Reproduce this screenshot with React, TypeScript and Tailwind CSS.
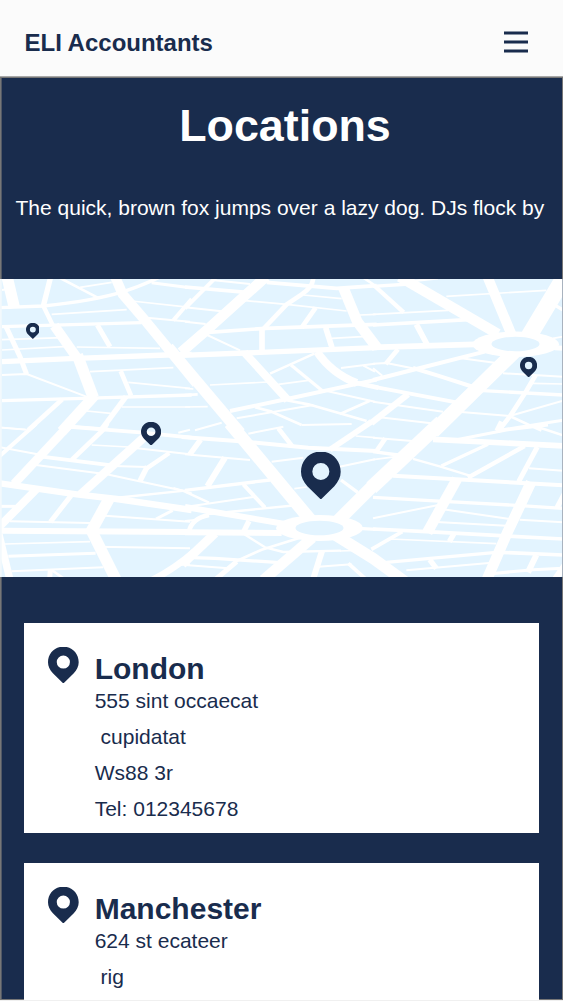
type Road = [width: number, d: string];

interface Tile {
  x: number;
  y: number;
  roads: Road[];
}

// Road strokes, one group per map tile, drawn at three units to the pixel.
const tiles: Tile[] = [
  {
    x: 0,
    y: -4,
    roads: [
      [34, 'M20 0L43 98'],
      [10, 'M0 98L130 93Q280 78 370 50Q430 30 475 8'],
      [16, 'M152 6L130 93'],
      [13, 'M130 93L158 150'],
      [30, 'M163 152L232 250'],
      [34, 'M232 240L280 368'],
      [32, 'M285 360L185 470'],
      [8, 'M178 8L293 68'],
      [5, 'M240 37L335 22'],
      [30, 'M343 0L368 58L440 142L508 225L590 326'],
      [5, 'M395 78L570 97'],
      [9, 'M455 23L570 38'],
      [5, 'M155 118L380 104'],
      [12, 'M575 72L520 136'],
      [6, 'M440 128L570 140'],
      [10, 'M6 155L425 143'],
      [15, 'M18 155L60 245L80 298'],
      [5, 'M6 194L190 188'],
      [5, 'M6 225L205 214'],
      [5, 'M230 216L480 220'],
      [15, 'M292 150L330 215'],
      [16, 'M6 260L230 250L500 240L575 238'],
      [6, 'M6 300L80 297L265 367'],
      [5, 'M270 290L520 278'],
      [14, 'M362 288L393 362'],
      [5, 'M385 322L570 340'],
      [10, 'M6 377L250 370L575 360'],
      [14, 'M187 373L85 465'],
      [16, 'M378 365L300 470'],
      [5, 'M365 396L570 396'],
      [5, 'M260 408L332 415'],
      [8, 'M220 454L325 462'],
      [5, 'M0 457L80 464'],
      [6, 'M6 45L22 42'],
    ],
  },
  {
    x: 185,
    y: -4,
    roads: [
      [31, 'M243 5L62 168L-12 232'],
      [11, 'M0 36L185 52'],
      [12, 'M92 8L0 100'],
      [6, 'M80 15L195 27'],
      [6, 'M0 97L110 109'],
      [6, 'M0 140L62 147'],
      [11, 'M245 22L455 40L575 32'],
      [8, 'M535 8L572 33'],
      [14, 'M385 6Q385 35 350 58L305 88L235 162'],
      [5, 'M180 77L305 88L485 108'],
      [5, 'M355 60L470 71'],
      [14, 'M392 98L350 158'],
      [32, 'M475 38L517 140L576 218'],
      [11, 'M60 173L240 160L575 148'],
      [5, 'M525 120L572 118'],
      [5, 'M440 190L545 184'],
      [17, 'M422 158L441 218'],
      [17, 'M231 162L231 228'],
      [6, 'M60 177L165 226'],
      [16, 'M-10 241L180 234L575 218'],
      [24, 'M178 232L308 375'],
      [34, 'M-50 217L26 308L166 474'],
      [7, 'M388 236L255 296'],
      [24, 'M396 230Q440 295 515 324'],
      [14, 'M505 322L580 338'],
      [10, 'M318 270L412 347'],
      [6, 'M468 279L570 266'],
      [6, 'M535 272L570 290'],
      [5, 'M280 328L370 316'],
      [5, 'M75 330L248 321'],
      [12, 'M135 408L320 369L575 314'],
      [8, 'M300 375L370 388L545 438'],
      [6, 'M415 346L570 380'],
      [8, 'M555 377L465 417'],
      [6, 'M155 430L385 390'],
      [8, 'M210 397L260 410L350 450'],
      [6, 'M350 450L500 447'],
      [6, 'M30 466L110 443'],
      [8, 'M0 360L38 358'],
      [5, 'M0 340L25 342'],
      [5, 'M0 396L68 395'],
    ],
  },
  {
    x: 373,
    y: -4,
    roads: [
      [31, 'M80 5L375 177'],
      [10, 'M0 34L110 27'],
      [7, 'M105 20L195 10'],
      [13, 'M5 33L92 112'],
      [5, 'M0 118L225 106'],
      [30, 'M343 4L416 180'],
      [50, 'M575 5L468 183'],
      [10, 'M548 92L575 108'],
      [5, 'M220 64L520 46'],
      [11, 'M0 150L285 134'],
      [17, 'M130 148L163 210'],
      [17, 'M0 217L305 208'],
      [5, 'M540 190L570 185'],
      [15, 'M545 218L575 220'],
      [14, 'M75 223L38 267'],
      [6, 'M0 266L40 264L130 282'],
      [12, 'M120 279L195 302L320 342'],
      [12, 'M335 230L130 282L0 315'],
      [6, 'M265 250L370 264'],
      [42, 'M425 230L180 470'],
      [11, 'M0 335L250 382'],
      [10, 'M330 347L570 360'],
      [6, 'M390 295L570 305'],
      [5, 'M478 325L570 327'],
      [14, 'M488 300L460 348L410 425L375 470'],
      [6, 'M0 280L28 302'],
      [19, 'M105 358L-5 444'],
      [6, 'M0 380L210 410'],
      [6, 'M265 411L410 423L570 377'],
      [6, 'M20 427L175 445'],
      [8, 'M410 423L505 467'],
      [9, 'M385 465L570 436'],
    ],
  },
  {
    x: 0,
    y: 146,
    roads: [
      [26, 'M215 -8L42 177'],
      [12, 'M108 -4L0 92'],
      [5, 'M0 8L75 14'],
      [6, 'M0 67L125 90'],
      [11, 'M200 5L420 22L575 38'],
      [14, 'M322 -5L312 12L215 105'],
      [26, 'M440 30L240 210'],
      [6, 'M535 23L570 14'],
      [5, 'M275 60L385 66'],
      [6, 'M405 69L570 88'],
      [11, 'M125 95L335 121'],
      [6, 'M340 123L440 126'],
      [13, 'M508 84L440 130'],
      [16, 'M442 124L420 168'],
      [6, 'M108 120L320 148L550 197'],
      [19, 'M0 175L230 208L350 222L575 255'],
      [7, 'M345 219L555 197'],
      [7, 'M520 189L575 206'],
      [24, 'M110 192L-5 308'],
      [9, 'M0 244L45 244'],
      [15, 'M213 212L151 291'],
      [6, 'M30 289L270 294'],
      [34, 'M328 220L272 322'],
      [34, 'M272 312L348 464'],
      [18, 'M0 317L575 321'],
      [6, 'M315 272L570 290'],
      [9, 'M518 256L468 282'],
      [5, 'M15 357L270 350'],
      [6, 'M290 365L570 370'],
      [9, 'M25 394L287 385'],
      [6, 'M35 439L310 427'],
      [15, 'M151 433L149 462'],
      [8, 'M155 435L192 461'],
      [20, 'M582 380Q525 430 455 466'],
      [6, 'M540 420L570 418'],
      [22, 'M-3 328L30 465'],
    ],
  },
  {
    x: 185,
    y: 146,
    roads: [
      [38, 'M134 -6L378 287'],
      [12, 'M-10 36L155 48L370 68L575 78'],
      [6, 'M190 26L295 5'],
      [16, 'M47 44L14 89'],
      [14, 'M280 10L322 64'],
      [6, 'M0 88L195 105'],
      [6, 'M260 110L355 98'],
      [18, 'M120 98L67 184'],
      [10, 'M0 196L255 165'],
      [7, 'M0 200L72 233'],
      [12, 'M175 178L240 248'],
      [6, 'M0 246L205 216'],
      [7, 'M70 267L340 240'],
      [18, 'M0 246L300 297'],
      [18, 'M0 322L290 324'],
      [14, 'M72 270Q20 280 12 320'],
      [6, 'M0 288L30 285'],
      [16, 'M192 288L175 322'],
      [38, 'M458 288L570 176'],
      [5, 'M328 191L365 186'],
      [10, 'M468 165L518 202'],
      [6, 'M460 126L570 103'],
      [17, 'M560 -10L435 74'],
      [5, 'M512 33L570 38'],
      [10, 'M520 310L572 313'],
      [27, 'M90 325L-8 418'],
      [7, 'M178 328L240 367L295 381L468 377'],
      [8, 'M345 338L230 374L155 408L120 440'],
      [15, 'M155 410L92 463'],
      [10, 'M0 397L90 400L285 413'],
      [32, 'M382 338L235 465'],
      [34, 'M448 328L564 400L660 470'],
      [18, 'M411 378L384 464'],
      [6, 'M0 420L130 430'],
      [6, 'M400 425L500 418'],
      [11, 'M490 415L542 462'],
      [5, 'M465 378L515 376'],
    ],
  },
  {
    x: 373,
    y: 146,
    roads: [
      [43, 'M205 -9L-5 188'],
      [16, 'M386 -10L372 18'],
      [9, 'M235 47L400 15L525 0'],
      [8, 'M485 3L570 31'],
      [17, 'M180 43L575 63'],
      [6, 'M0 38L118 48'],
      [14, 'M37 40L8 82'],
      [10, 'M0 80L75 90'],
      [5, 'M0 104L75 94'],
      [10, 'M345 58L205 123'],
      [7, 'M120 102L200 124L290 152'],
      [13, 'M455 63L285 158'],
      [15, 'M493 66L437 170'],
      [6, 'M468 130L570 137'],
      [12, 'M60 152L570 181'],
      [32, 'M252 162L163 322'],
      [32, 'M474 172L402 325L342 463'],
      [10, 'M0 217L225 230L430 241L570 250'],
      [16, 'M575 205L552 248'],
      [6, 'M0 280L200 239'],
      [6, 'M210 253L410 282'],
      [6, 'M440 284L570 292'],
      [6, 'M190 291L400 302'],
      [11, 'M0 312L160 320L570 342'],
      [11, 'M88 320L-5 373'],
      [5, 'M50 342L370 356'],
      [16, 'M243 326L229 350'],
      [10, 'M40 412L370 382'],
      [11, 'M380 382L570 390'],
      [16, 'M170 404L190 430'],
      [6, 'M100 436L348 414'],
      [18, 'M490 390L465 442'],
      [9, 'M355 446L480 434L570 430'],
      [20, 'M580 415L545 465'],
    ],
  },
];

function Pin({ className }: { className: string }) {
  return (
    <svg viewBox="0 0 40 48" preserveAspectRatio="none" className={className} fill="#192c4d" aria-hidden="true">
      <path
        fillRule="evenodd"
        d="M15.5 0H24.5C33.5 2 40 10 40 20C40 25.4 37.6 30.2 33.6 34.6L20 48L6.4 34.6C2.4 30.2 0 25.4 0 20C0 10 6.5 2 15.5 0ZM20 11.2A8.6 8.6 0 1 0 20 28.4A8.6 8.6 0 1 0 20 11.2Z"
      />
    </svg>
  );
}

function StreetMap() {
  return (
    <div className="relative h-[298px] w-full shrink-0 overflow-hidden">
      <svg viewBox="0 0 563 298" className="block h-[298px] w-[563px]" aria-hidden="true">
        <rect width="563" height="298" fill="#e3f4ff" />
        {tiles.map((tile) => (
          <g
            key={`${tile.x}:${tile.y}`}
            transform={`translate(${tile.x} ${tile.y}) scale(0.33333)`}
            fill="none"
            stroke="#fff"
            strokeLinejoin="round"
          >
            {tile.roads.map(([width, d], i) => (
              <path key={i} d={d} strokeWidth={width} />
            ))}
          </g>
        ))}
        <ellipse cx="515.7" cy="65.3" rx="43.3" ry="12.7" fill="#fff" />
        <ellipse cx="515.5" cy="65" rx="24" ry="7.2" fill="#e3f4ff" />
        <ellipse cx="319.5" cy="249" rx="43.5" ry="13" fill="#fff" />
        <ellipse cx="319.5" cy="249" rx="24" ry="7.2" fill="#e3f4ff" />
        <rect width="1.7" height="298" fill="#f3f9fd" />
        <rect x="562" width="1" height="298" fill="#a9b3bf" />
      </svg>
      <Pin className="absolute top-[43.7px] left-[25.5px] h-[16px] w-[13.7px]" />
      <Pin className="absolute top-[77.7px] left-[520.3px] h-[20.5px] w-[17.2px]" />
      <Pin className="absolute top-[142.7px] left-[140.8px] h-[23.7px] w-[20.2px]" />
      <Pin className="absolute top-[172.7px] left-[301.3px] h-[47.5px] w-[39.7px]" />
    </div>
  );
}

interface Office {
  city: string;
  lines: string[];
}

const offices: Office[] = [
  { city: 'London', lines: ['555 sint occaecat', ' cupidatat', 'Ws88 3r', 'Tel: 012345678'] },
  { city: 'Manchester', lines: ['624 st ecateer', ' rig'] },
];

function OfficeCard({ office }: { office: Office }) {
  return (
    <article className="flex h-[210px] shrink-0 bg-white pl-6">
      <Pin className="mt-[24.3px] h-[36.5px] w-[30.7px] shrink-0" />
      <div className="ml-[16px] pt-[28px]">
        <h2 className="text-[30px] leading-[36px] font-bold">{office.city}</h2>
        <div className="-mt-[4px] text-[21px] leading-[36px] whitespace-pre">
          {office.lines.map((line) => (
            <p key={line}>{line}</p>
          ))}
        </div>
      </div>
    </article>
  );
}

export default function App() {
  return (
    <div className="flex h-[1001px] w-[563px] flex-col overflow-hidden bg-[#f0f0f0] font-['Liberation_Sans',Arial,sans-serif] text-[#192c4d]">
      <header className="flex h-[76px] shrink-0 items-center justify-between bg-[#fbfbfb] pt-2 pr-[35px] pl-[24.5px]">
        <div className="pt-0.5 text-2xl font-bold">ELI Accountants</div>
        <button type="button" aria-label="Menu">
          <svg viewBox="0 0 24 24" className="block size-6" fill="#192c4d">
            <path d="M0 1.5h24v3H0zM0 10.5h24v3H0zM0 19.5h24v3H0z" />
          </svg>
        </button>
      </header>
      <div className="h-px shrink-0 bg-[#a8a8a8]" />
      <main className="flex h-[923px] shrink-0 flex-col overflow-hidden bg-[#192c4d] shadow-[inset_1.6px_1px_0_#777,inset_-1px_-1px_0_#777]">
        <div className="flex h-[202px] shrink-0 flex-col text-center text-white">
          <h1 className="mt-[22px] pl-[7px] text-[44.8px] leading-[52px] font-bold">Locations</h1>
          <p className="mt-[39px] pl-[15.5px] text-left text-[21px] leading-[36px] whitespace-nowrap">
            The quick, brown fox jumps over a lazy dog. DJs flock by
          </p>
        </div>
        <StreetMap />
        <section className="mt-[45.5px] mr-[24.5px] ml-6 flex flex-col gap-[30px]">
          {offices.map((office) => (
            <OfficeCard key={office.city} office={office} />
          ))}
        </section>
      </main>
    </div>
  );
}
